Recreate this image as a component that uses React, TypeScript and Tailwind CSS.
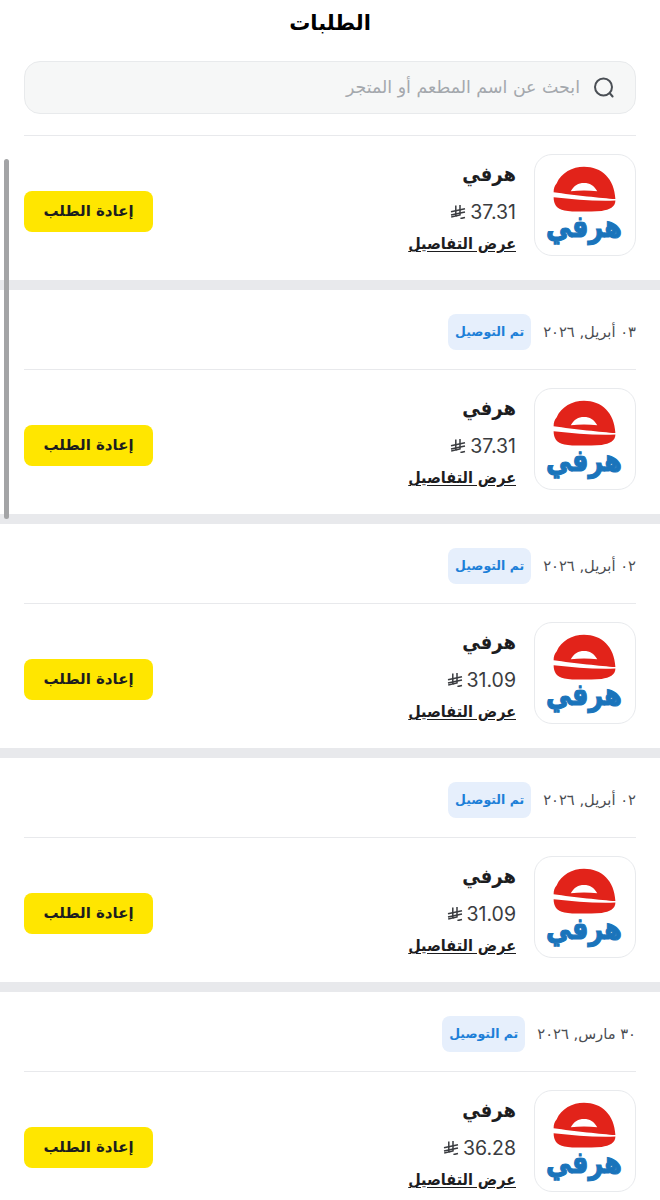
import React from "react";

const font = "font-['DejaVu_Sans','Noto_Sans',sans-serif]";
const cond = "font-['DejaVu_Sans_Condensed','DejaVu_Sans',sans-serif]";

function Riyal({ className = "" }: { className?: string }) {
  return (
    <svg viewBox="0 0 16 14" className={className} fill="none" stroke="currentColor" strokeWidth="1.5" strokeLinecap="butt">
      <path d="M5.8 0.6V11L1.2 12" />
      <path d="M10 0V10L5.8 11" />
      <path d="M1 6.8L15 3.8" />
      <path d="M1 10L15 7" />
      <path d="M10.4 13.6L15 12.6" />
    </svg>
  );
}

function Logo() {
  return (
    <div className="w-[102px] h-[102px] rounded-[18px] border border-[#e8eaed] bg-white flex items-center justify-center shrink-0">
      <svg viewBox="0 0 102 102" className="w-[100px] h-[100px]">
        <path
          fillRule="evenodd"
          d="M19 38C19 34 20 31 22 29C27 18 38 12 50 12C68 12 81 24 82 45C68 44 40 41 19 38ZM36.5 37C45 35.8 55 35.8 63.5 37C60 31 56 28.5 50 28.5C44 28.5 40 31 36.5 37Z"
          fill="#e2231a"
        />
        <path d="M19 43C40 45 60 47.5 82 46.5C82 53 76 56 68 57C52 58 38 58 30 56.5C22 55 19 50 19 43Z" fill="#e2231a" />
        <text x="50" y="84" textAnchor="middle" fill="#1a74bb" stroke="#1a74bb" strokeWidth="1" fontSize="26" fontWeight="700" fontFamily="DejaVu Sans" transform="translate(0 -17) scale(1 1.2)">هرفي</text>
      </svg>
    </div>
  );
}

function Row({ price }: { price: string }) {
  return (
    <div className="h-[144px] flex items-start justify-between px-6 pt-[18px]" dir="rtl">
      <div className="flex items-start gap-[18px]">
        <Logo />
        <div className="flex flex-col items-start">
          <div className={`text-[20px] leading-[30px] mt-[5px] font-bold text-[#1d1d1f] ${cond}`}>هرفي</div>
          <div className="flex items-center gap-[4px] text-[19.5px] leading-[30px] text-[#3a3c40] mt-[8px]" dir="rtl">
            <span className="font-['Inter',sans-serif]">{price}</span>
            <Riyal className="w-4 h-[14px]" />
          </div>
          <div className={`text-[16px] leading-[26px] font-bold text-[#1d1d1f] underline underline-offset-2 mt-[4px] ${cond}`}>عرض التفاصيل</div>
        </div>
      </div>
      <button className="w-[129px] h-[41px] mt-[37px] rounded-lg bg-[#ffe600] text-[#1d1d1f] text-[15px] font-bold">إعادة الطلب</button>
    </div>
  );
}

function Order({ date, price }: { date: string; price: string }) {
  return (
    <section className="border-t-[10px] border-[#e8e9ec]">
      <div className="h-[79px] pt-[5px] flex items-center gap-3 px-6" dir="rtl">
        <span className="text-[14.7px] text-[#4a4d52]">{date}</span>
        <span className="h-9 px-[7px] rounded-lg bg-[#e6effc] text-[#1d7fd8] text-[12.5px] font-bold flex items-center">تم التوصيل</span>
      </div>
      <div className="mx-6 h-px bg-[#e8e9ec]" />
      <Row price={price} />
    </section>
  );
}

export default function App() {
  return (
    <div className={`relative w-[660px] h-[1200px] overflow-hidden bg-white ${font}`}>
      <h1 className="h-[48px] flex items-center justify-center text-[21px] font-bold text-black" dir="rtl">الطلبات</h1>
      <div className="mx-6 mt-[13px] h-[53px] rounded-2xl border border-[#e8eaec] bg-[#f6f7f7] flex items-center gap-[14px] px-[19px]" dir="rtl">
        <svg viewBox="0 0 24 24" className="w-[24px] h-[24px] text-[#4a4f55]" fill="none" stroke="currentColor" strokeWidth="2" strokeLinecap="round">
          <circle cx="11.5" cy="11" r="8.5" />
          <path d="M18 17.5l2.6 3" />
        </svg>
        <span className="text-[17.4px] text-[#a4a8ad] -mr-[2px]">ابحث عن اسم المطعم أو المتجر</span>
      </div>
      <div className="mx-6 mt-[21px] h-px bg-[#e8e9ec]" />
      <Row price="37.31" />
      <Order date="٠٣ أبريل, ٢٠٢٦" price="37.31" />
      <Order date="٠٢ أبريل, ٢٠٢٦" price="31.09" />
      <Order date="٠٢ أبريل, ٢٠٢٦" price="31.09" />
      <Order date="٣٠ مارس, ٢٠٢٦" price="36.28" />
      <div className="absolute left-1 top-[159px] w-[5px] h-[360px] rounded-full bg-[#a3a4a6]" />
    </div>
  );
}
